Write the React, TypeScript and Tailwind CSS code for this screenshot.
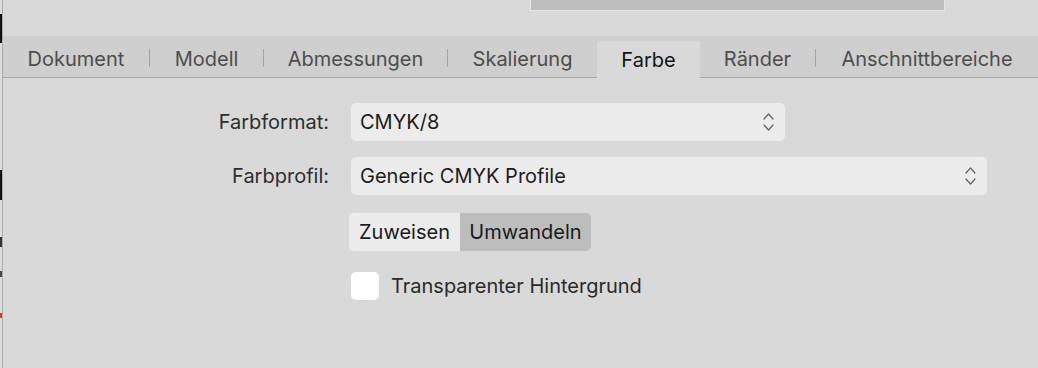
import React from 'react';

const tabs = [
  { label: 'Dokument', w: 'w-[146px]', sep: true },
  { label: 'Modell', w: 'w-[113px]', sep: true },
  { label: 'Abmessungen', w: 'w-[183px]', sep: true },
  { label: 'Skalierung', w: 'w-[149px]', sep: false },
  { label: 'Farbe', w: 'w-[103px]', sep: false, active: true },
  { label: 'Ränder', w: 'w-[115px]', sep: true },
  { label: 'Anschnittbereiche', w: 'w-[222px]', sep: false },
];

function Chevrons() {
  return (
    <svg width="11" height="20" viewBox="0 0 11 20" fill="none" stroke="#626262" strokeWidth="1.2" strokeLinecap="round" strokeLinejoin="round">
      <path d="M1 7 L5.5 2 L10 7" />
      <path d="M1 13 L5.5 18 L10 13" />
    </svg>
  );
}

function PopUp({ value, width }: { value: string; width: string }) {
  return (
    <div className={`${width} h-[38px] rounded-[5px] bg-[#ececec] flex items-center justify-between pl-[9px] pr-[11px] text-[#1c1c1c]`}>
      <span>{value}</span>
      <Chevrons />
    </div>
  );
}

export default function App() {
  return (
    <div
      className="w-[1038px] h-[368px] bg-[#d9d9d9] flex overflow-hidden text-[20px] leading-[24px]"
      style={{ fontFamily: 'Inter, "Noto Sans", sans-serif' }}
    >
      {/* Rand des Fensters dahinter */}
      <div className="w-[2px] flex flex-col bg-[#dcdcdc]">
        <div className="mt-[14px] h-[29px] bg-[#111]" />
        <div className="mt-[127px] h-[30px] bg-[#111]" />
        <div className="mt-[37px] h-[10px] bg-[#333]" />
        <div className="mt-[24px] h-[6px] bg-[#444]" />
        <div className="mt-[36px] h-[5px] bg-[#d33]" />
      </div>
      <div className="flex-1 border-l border-[#ababab] flex flex-col">
        <div className="h-[36px]">
          <div className="ml-[527px] w-[415px] h-[11px] bg-[#bdbdbd] border-x border-b border-[#e6e6e6]" />
        </div>

        <div className="h-[42px] bg-[#cfcfcf] border-b border-[#a9a9a9] flex items-end">
          {tabs.map((t) => (
            <React.Fragment key={t.label}>
              <div
                className={`${t.w} flex items-center justify-center ${
                  t.active ? 'h-[37px] bg-[#d9d9d9] text-[#141414] -mb-px pb-px' : 'h-[41px] text-[#4d4d4d]'
                }`}
              >
                <span className={t.active ? 'pt-[1px]' : 'pt-[4px]'}>{t.label}</span>
              </div>
              {t.sep && <div className="w-px h-[18px] mt-[3px] bg-[#a3a3a3] self-center" />}
            </React.Fragment>
          ))}
        </div>

        <div className="pt-[25px] flex flex-col">
          <div className="flex items-center">
            <div className="w-[326px] text-right text-[#2e2e2e]">Farbformat:</div>
            <div className="ml-[22px]">
              <PopUp value="CMYK/8" width="w-[434px]" />
            </div>
          </div>

          <div className="flex items-center mt-[16px]">
            <div className="w-[326px] text-right text-[#2e2e2e]">Farbprofil:</div>
            <div className="ml-[22px]">
              <PopUp value="Generic CMYK Profile" width="w-[636px]" />
            </div>
          </div>

          <div className="flex mt-[18px] ml-[346px]">
            <div className="flex h-[38px] rounded-[5px] overflow-hidden text-[#1a1a1a]">
              <div className="w-[111px] bg-[#ececec] flex items-center justify-center">Zuweisen</div>
              <div className="w-[131px] bg-[#bdbdbd] flex items-center justify-center">Umwandeln</div>
            </div>
          </div>

          <div className="flex items-center mt-[21px] ml-[348px]">
            <div className="w-[28px] h-[28px] rounded-[5px] bg-white" />
            <span className="ml-[12px] text-[#2a2a2a]">Transparenter Hintergrund</span>
          </div>
        </div>
      </div>
    </div>
  );
}
